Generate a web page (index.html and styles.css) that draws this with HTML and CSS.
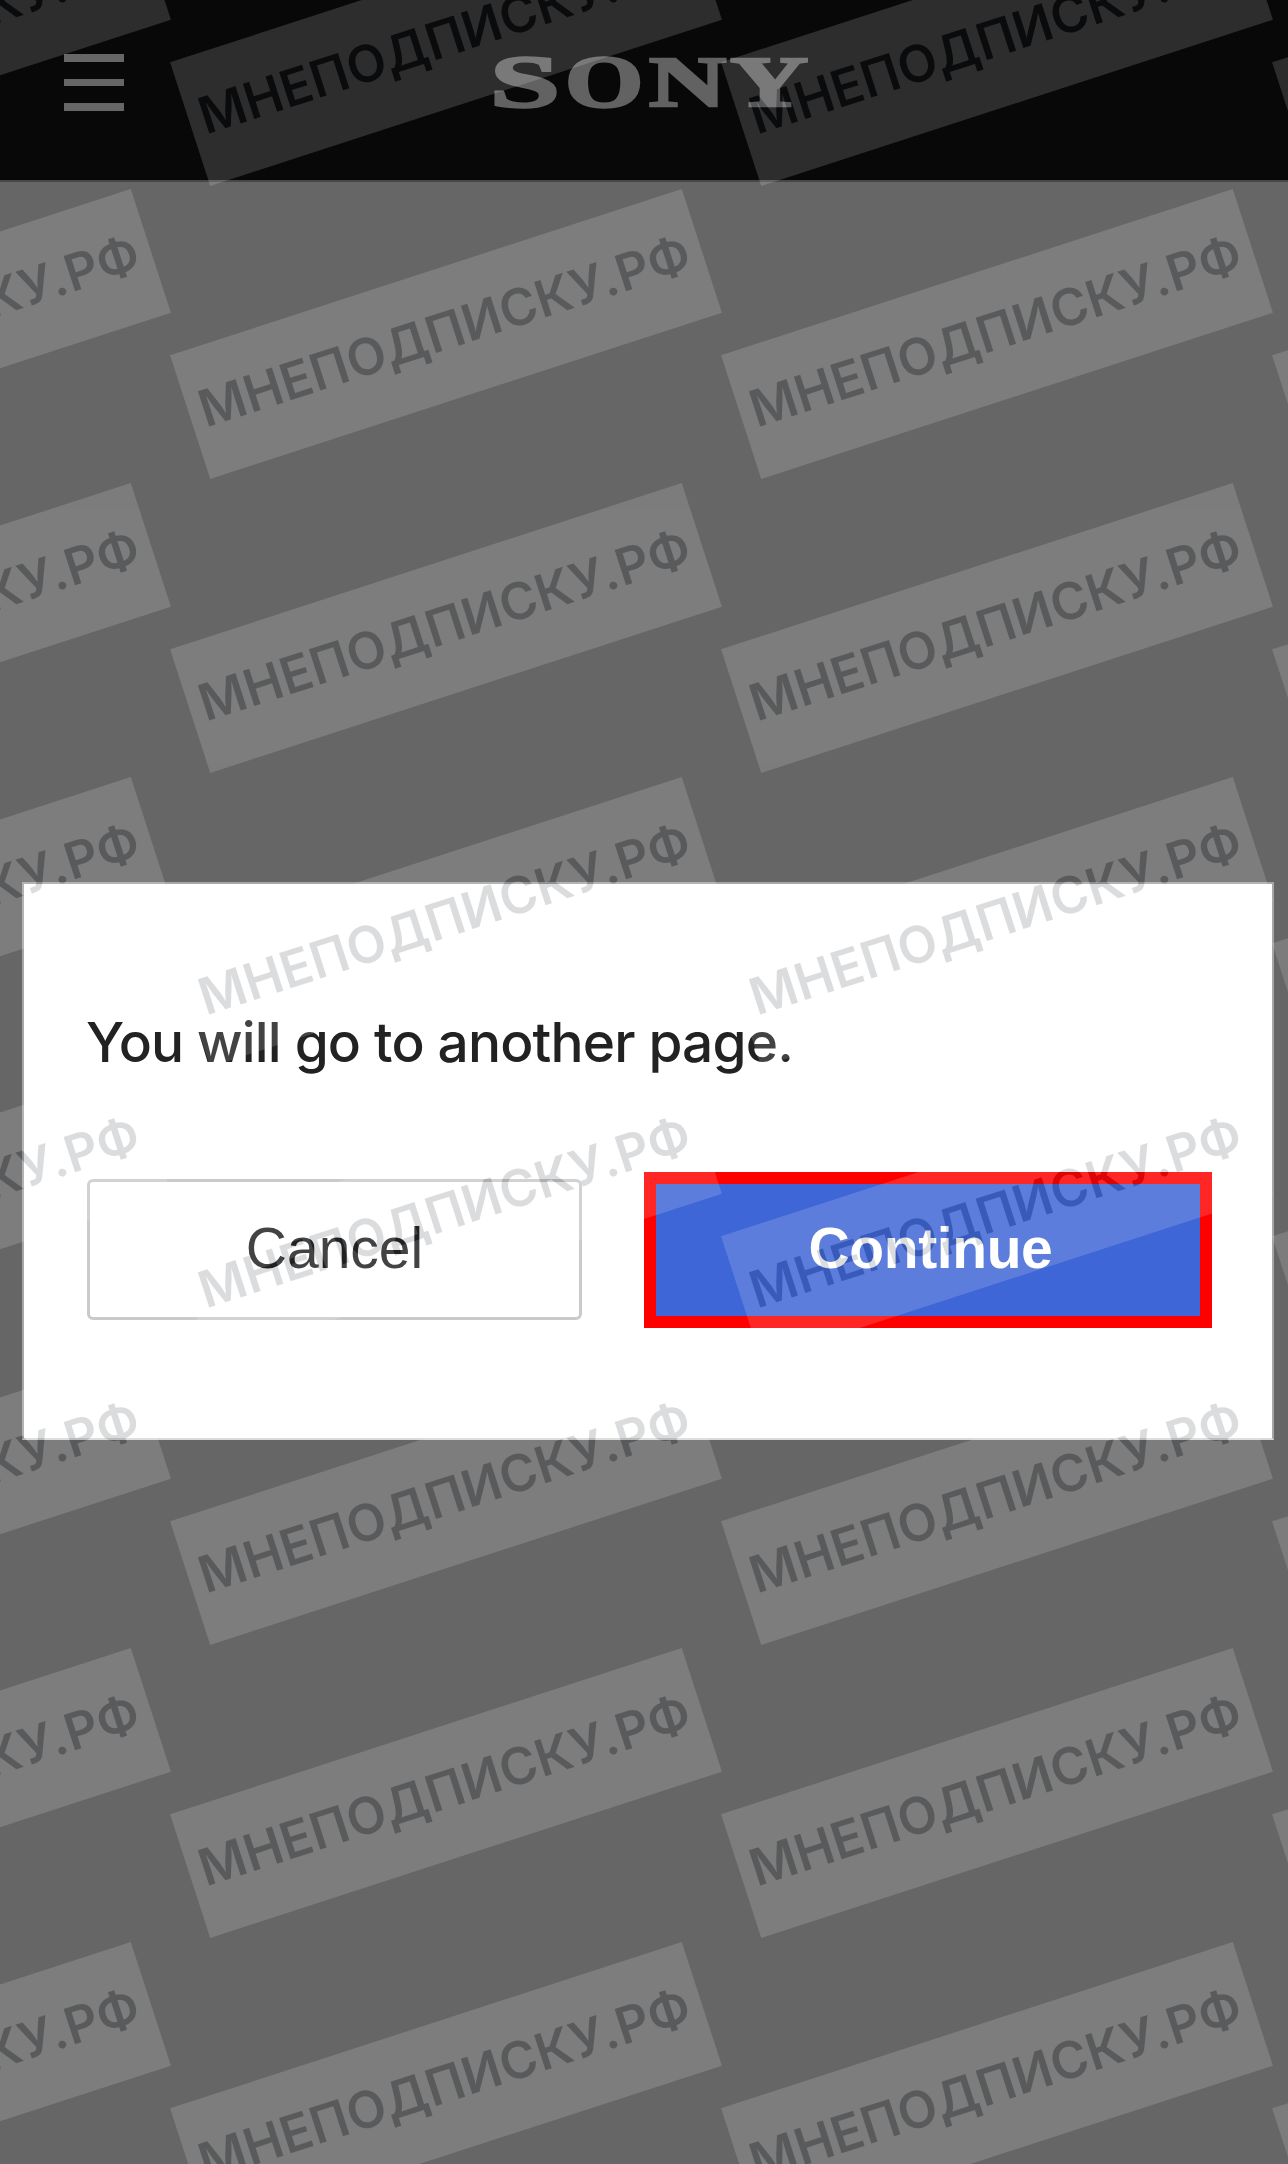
FILE: index.html
```html
<!DOCTYPE html>
<html lang="en">
<head>
<meta charset="utf-8">
<title>Sony</title>
<link rel="stylesheet" href="styles.css">
</head>
<body>
<div class="page">
  <header class="header">
    <button class="menu" aria-label="Menu"><span class="bar"></span><span class="bar"></span><span class="bar"></span></button>
    <svg class="logo" width="320" height="60" viewBox="0 0 320 60" role="img" aria-label="Sony">
      <g class="logo-text">
        <text transform="translate(-1.9 54.9) scale(1.77 1.05)">S</text>
        <text transform="translate(72.9 54.9) scale(1.42 1.05)">O</text>
        <text transform="translate(156.9 54) scale(1.505 1)">N</text>
        <text transform="translate(238.3 54) scale(1.52 1)">Y</text>
      </g>
    </svg>
  </header>
  <main class="backdrop">
    <section class="dialog" role="dialog">
      <p class="message">You will go to another page.</p>
      <div class="actions">
        <button class="btn cancel"><span class="cancel-label">Cancel</span></button>
        <button class="btn continue"><span class="continue-label">Continue</span></button>
      </div>
    </section>
  </main>
  <div class="marks" aria-hidden="true">
    <div class="sheet">
      <div class="cell"><span class="mark">МНЕПОДПИСКУ.РФ</span></div><div class="cell"><span class="mark">МНЕПОДПИСКУ.РФ</span></div><div class="cell"><span class="mark">МНЕПОДПИСКУ.РФ</span></div><div class="cell"><span class="mark">МНЕПОДПИСКУ.РФ</span></div>
      <div class="cell"><span class="mark">МНЕПОДПИСКУ.РФ</span></div><div class="cell"><span class="mark">МНЕПОДПИСКУ.РФ</span></div><div class="cell"><span class="mark">МНЕПОДПИСКУ.РФ</span></div><div class="cell"><span class="mark">МНЕПОДПИСКУ.РФ</span></div>
      <div class="cell"><span class="mark">МНЕПОДПИСКУ.РФ</span></div><div class="cell"><span class="mark">МНЕПОДПИСКУ.РФ</span></div><div class="cell"><span class="mark">МНЕПОДПИСКУ.РФ</span></div><div class="cell"><span class="mark">МНЕПОДПИСКУ.РФ</span></div>
      <div class="cell"><span class="mark">МНЕПОДПИСКУ.РФ</span></div><div class="cell"><span class="mark">МНЕПОДПИСКУ.РФ</span></div><div class="cell"><span class="mark">МНЕПОДПИСКУ.РФ</span></div><div class="cell"><span class="mark">МНЕПОДПИСКУ.РФ</span></div>
      <div class="cell"><span class="mark">МНЕПОДПИСКУ.РФ</span></div><div class="cell"><span class="mark">МНЕПОДПИСКУ.РФ</span></div><div class="cell"><span class="mark">МНЕПОДПИСКУ.РФ</span></div><div class="cell"><span class="mark">МНЕПОДПИСКУ.РФ</span></div>
    </div>
    <div class="sheet sheet-lower">
      <div class="cell"><span class="mark">МНЕПОДПИСКУ.РФ</span></div><div class="cell"><span class="mark">МНЕПОДПИСКУ.РФ</span></div><div class="cell"><span class="mark">МНЕПОДПИСКУ.РФ</span></div><div class="cell"><span class="mark">МНЕПОДПИСКУ.РФ</span></div>
      <div class="cell"><span class="mark">МНЕПОДПИСКУ.РФ</span></div><div class="cell"><span class="mark">МНЕПОДПИСКУ.РФ</span></div><div class="cell"><span class="mark">МНЕПОДПИСКУ.РФ</span></div><div class="cell"><span class="mark">МНЕПОДПИСКУ.РФ</span></div>
      <div class="cell"><span class="mark">МНЕПОДПИСКУ.РФ</span></div><div class="cell"><span class="mark">МНЕПОДПИСКУ.РФ</span></div><div class="cell"><span class="mark">МНЕПОДПИСКУ.РФ</span></div><div class="cell"><span class="mark">МНЕПОДПИСКУ.РФ</span></div>
    </div>
  </div>
</div>
</body>
</html>
```
FILE: styles.css
```css
* { box-sizing: border-box; }
body { margin: 0; background: #666; font-family: Inter, "Liberation Sans", sans-serif; }
button { font: inherit; padding: 0; margin: 0; border: 0; background: none; }

.page { position: relative; width: 1288px; height: 2164px; overflow: hidden; background: #666; }

.header { display: flex; align-items: flex-start; height: 182px; background: #080808; border-bottom: 2px solid #474747; }
.menu { display: flex; flex-direction: column; gap: 17px; margin: 54px 0 0 64px; width: 60px; }
.bar { height: 7.6px; background: #666; }
.logo { margin: 52px 0 0 368px; display: block; overflow: visible; }
.logo-text { font: bold 71px "Liberation Serif", serif; fill: #626262; stroke: #626262; stroke-width: 2.5px; }

.backdrop { padding: 700px 14px 0 22px; }
.dialog { height: 558px; padding: 128px 60px 0 63px; background: #fff; border: 2px solid #a6a6a6; border-bottom-color: #d8dad8; }
.message { margin: 0 0 0 -1px; height: 60px; line-height: 60px; font-size: 55px; font-weight: 450; letter-spacing: -0.85px; color: #222; white-space: nowrap; }
.actions { display: flex; align-items: center; justify-content: space-between; margin-top: 100px; }
.btn { display: flex; align-items: center; justify-content: center; white-space: nowrap; font-family: "Liberation Sans", Arial, sans-serif; font-size: 57px; }
.cancel { width: 495px; height: 141px; margin-bottom: 2px; padding-bottom: 2px; border: 3px solid #cacaca; border-radius: 6px; color: #222; }
.continue { width: 568px; height: 156px; padding: 0 0 4px 5px; border: 12px solid #f00; background: #3f66d6; font-weight: 700; letter-spacing: -0.4px; color: #fff; }

.marks { position: absolute; inset: 0; overflow: hidden; pointer-events: none; }
.sheet { display: grid; grid-template-columns: repeat(4, 551px); grid-auto-rows: 293.67px; margin: -106.3px 0 0 -380.8px; width: 2204px; }
.sheet-lower { margin-top: -9.1px; }
.cell { display: flex; align-items: center; justify-content: center; }
.mark { flex: none; width: 538px; height: 130px; padding: 0 1px 8px 0; display: flex; align-items: center; justify-content: center; background: #fff; color: #141c2a; opacity: .15; transform: rotate(-18deg); font: 630 51px Inter, sans-serif; letter-spacing: 0.3px; white-space: nowrap; }
```
